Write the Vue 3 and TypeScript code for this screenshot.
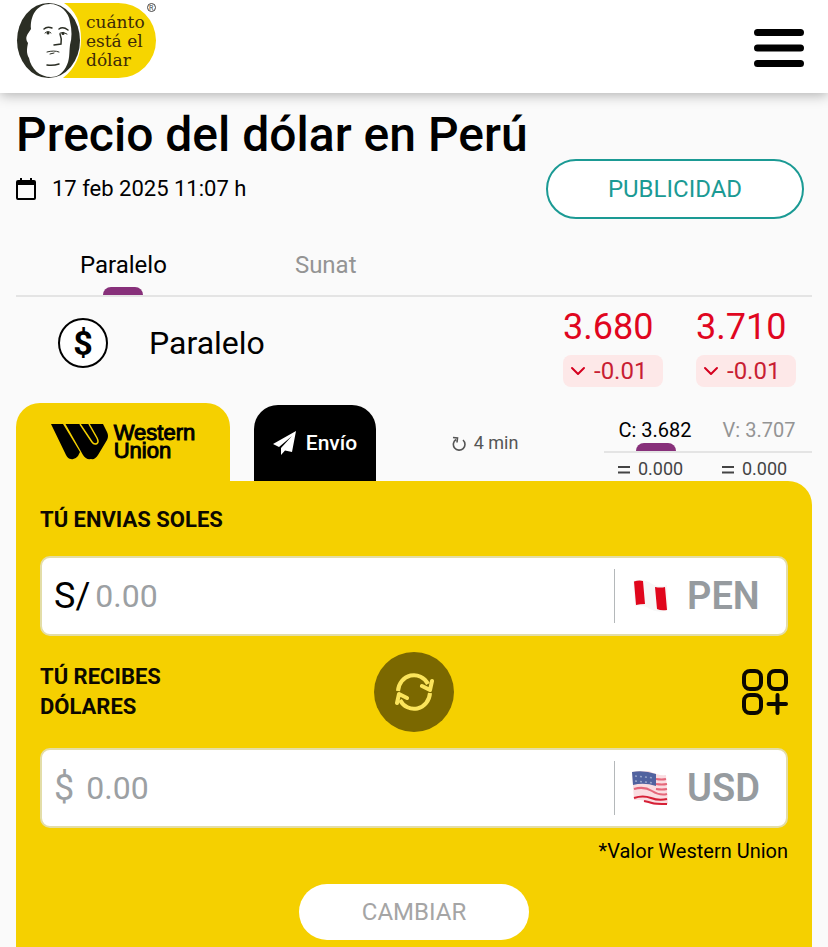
<script setup lang="ts">
import { ref } from 'vue'

interface Rate {
  side: string
  value: string
  change: string
}

const marketTabs: string[] = ['Paralelo', 'Sunat']
const activeMarket = ref('Paralelo')

const parallelRates: Rate[] = [
  { side: 'Compra', value: '3.680', change: '-0.01' },
  { side: 'Venta', value: '3.710', change: '-0.01' },
]

const partnerRates: Rate[] = [
  { side: 'C', value: '3.682', change: '0.000' },
  { side: 'V', value: '3.707', change: '0.000' },
]
const activeSide = ref('C')

const soles = ref('')
const dollars = ref('')
</script>

<template>
  <div class="page">
    <header class="topbar">
      <a class="brand" href="#" aria-label="cuánto está el dólar">
        <svg width="142" height="80" viewBox="0 0 142 80">
          <path d="M48 3H102.500a37.500 37.500 0 0 1 0 75H47Q65 64 65 39T48 3Z" fill="#f6d500" />
          <ellipse cx="32.500" cy="40.500" rx="31.500" ry="37.500" fill="#2b2e24" />
          <path d="M34 4C44 4 53 12 54 22C56 30 56 38 54 45C53 53 54 60 50 67C46 74 41 77 35 77C24 77 15 69 13 58C10 53 11 48 12 43C8 37 12 34 15 29C14 17 20 4 34 4Z" fill="#fff" />
          <g fill="none" stroke="#2b2e24" stroke-linecap="round">
            <path d="M28 29Q31 26 36 28M43 29Q47 26 52 30" stroke-width="1.500" />
            <path d="M29 33Q32 30 35 33M44 33Q47 31 51 34" stroke-width="1" />
            <path d="M44 34Q46 39 45 44L38 45" stroke-width="1.500" />
            <path d="M31 52Q38 50 43 52M34 54L38 53" stroke-width="1" />
            <path d="M31 65Q37 66 43 64" stroke-width="1.500" />
          </g>
          <circle cx="32" cy="33" r="1.500" fill="#2b2e24" />
          <circle cx="47" cy="33.500" r="1.500" fill="#2b2e24" />
          <text class="brand-word" x="70" y="28">cuánto</text>
          <text class="brand-word" x="70" y="47">está el</text>
          <text class="brand-word" x="70" y="66">dólar</text>
          <circle cx="135.500" cy="7.500" r="4" fill="none" stroke="#444" stroke-width="1" />
          <text class="brand-mark" x="133" y="10">R</text>
        </svg>
      </a>
      <button class="menu" type="button" aria-label="Menú">
        <svg width="50" height="40" viewBox="0 0 50 40">
          <path d="M3.500 4.500H46.500M3.500 20H46.500M3.500 35.500H46.500" stroke="#000" stroke-width="7" stroke-linecap="round" />
        </svg>
      </button>
    </header>

    <main class="content">
      <h1>Precio del dólar en Perú</h1>
      <div class="meta">
        <p class="date">
          <svg width="20" height="22" viewBox="0 0 20 22" aria-hidden="true">
            <path d="M4 0H6V2H14V0H16V2H18Q20 2 20 4V20Q20 22 18 22H2Q0 22 0 20V4Q0 2 2 2H4ZM2 7V20H18V7Z" fill="#000" fill-rule="evenodd" />
          </svg>
          <time datetime="2025-02-17T11:07">17 feb 2025 11:07 h</time>
        </p>
        <a class="ad" href="#">PUBLICIDAD</a>
      </div>

      <nav class="tabs">
        <button
          v-for="tab in marketTabs"
          :key="tab"
          type="button"
          class="tab"
          :class="{ active: tab === activeMarket }"
          @click="activeMarket = tab"
        >{{ tab }}</button>
      </nav>

      <section class="quote">
        <span class="coin">$</span>
        <h2>Paralelo</h2>
        <div class="rates">
          <div v-for="rate in parallelRates" :key="rate.side" class="rate">
            <strong>{{ rate.value }}</strong>
            <span class="change">
              <svg width="16" height="10" viewBox="0 0 16 10" aria-hidden="true">
                <path d="M2 2L8 8L14 2" fill="none" stroke="#d5001f" stroke-width="2" stroke-linecap="round" stroke-linejoin="round" />
              </svg>
              {{ rate.change }}
            </span>
          </div>
        </div>
      </section>

      <section class="partner">
        <button class="partner-tab" type="button">
          <svg width="57" height="36" viewBox="0 0 57 36" aria-hidden="true">
            <path d="M0 0H12L29 28L27 32Q24 36 20 35Q17 35 15 31Z" />
            <path d="M14.500 0H52L56 8Q58 12 56 16L47 31Q44 36 40 35Q35 36 32 31Z" />
            <path d="M29 0L41 18Q43 21 46 19.500Q48 18 46 14L38 0" fill="none" stroke="#f5d000" stroke-width="1.500" />
          </svg>
          <span class="partner-name">
            <span>Western</span>
            <span>Union</span>
          </span>
        </button>
        <button class="send-tab" type="button">
          <svg width="24" height="24" viewBox="0 0 24 24" aria-hidden="true">
            <path d="M23 0L0 13L6 16L19 5L8 17V24L12 19.500L19 21Z" fill="#fff" />
          </svg>
          Envío
        </button>
        <p class="age">
          <svg width="14" height="16" viewBox="0 0 14 16" aria-hidden="true">
            <path d="M4 4.500A5.800 5.800 0 1 0 11 5M1 2.500L5.500 3L5 7.500" fill="none" stroke="#555" stroke-width="1.600" />
          </svg>
          4 min
        </p>
        <div class="sides">
          <div class="side-tabs">
            <button
              v-for="rate in partnerRates"
              :key="rate.side"
              type="button"
              class="side"
              :class="{ active: rate.side === activeSide }"
              @click="activeSide = rate.side"
            >{{ rate.side }}: {{ rate.value }}</button>
          </div>
          <div class="side-changes">
            <span v-for="rate in partnerRates" :key="rate.side">
              <svg width="12" height="9" viewBox="0 0 12 9" aria-hidden="true">
                <path d="M0 2H12M0 7.500H12" stroke="#444" stroke-width="2" />
              </svg>
              {{ rate.change }}
            </span>
          </div>
        </div>
      </section>

      <form class="converter" @submit.prevent>
        <label class="caption" for="soles">TÚ ENVIAS SOLES</label>
        <div class="field">
          <span class="symbol">S/</span>
          <input id="soles" v-model="soles" type="text" inputmode="decimal" placeholder="0.00">
          <button class="currency" type="button">
            <svg width="36" height="34" viewBox="0 0 36 34" aria-hidden="true">
              <path d="M1 2Q11 -1 20 5Q28 9 35 6L36 31Q27 35 18 30Q11 25 3 27Z" fill="#f7f7f7" />
              <path d="M2 2.500Q7 1 11 2L13 25Q8 25 4 26Z" fill="#e0061c" />
              <path d="M23 8Q29 9 33 8L35 31Q29 32 25 30Z" fill="#e0061c" />
            </svg>
            <span>PEN</span>
          </button>
        </div>

        <div class="middle">
          <label class="caption" for="dollars">TÚ RECIBES DÓLARES</label>
          <button class="swap" type="button" aria-label="Invertir monedas">
            <svg width="40" height="40" viewBox="0 0 40 40">
              <g fill="none" stroke="#fbe45b" stroke-width="4" stroke-linejoin="round">
                <path d="M4 19A16 17 0 0 1 34 12" />
                <path d="M36 21A16 17 0 0 1 6 28" />
                <path d="M28 14L36 18L38 9M3 31L5 22L13 26" stroke-linecap="round" />
              </g>
            </svg>
          </button>
          <button class="more" type="button" aria-label="Más opciones">
            <svg width="48" height="48" viewBox="0 0 48 48">
              <g fill="none" stroke="#0c0800" stroke-width="4" stroke-linecap="round">
                <rect x="4" y="3" width="17" height="18" rx="6" />
                <rect x="29" y="3" width="17" height="18" rx="6" />
                <rect x="4" y="27" width="17" height="18" rx="6" />
                <path d="M37.500 27V45M28.500 36H46" />
              </g>
            </svg>
          </button>
        </div>

        <div class="field">
          <span class="symbol muted">$</span>
          <input id="dollars" v-model="dollars" type="text" inputmode="decimal" placeholder="0.00">
          <button class="currency" type="button">
            <svg width="36" height="34" viewBox="0 0 36 34" aria-hidden="true">
              <path d="M0 1Q8 -1 17 0Q26 5 34 4L36 33Q27 35 19 33Q10 28 2 29Z" fill="#fadde1" />
              <path d="M24 8Q30 9 34 8M24 13Q30 14 35 13M24 18Q30 19 35 18M2 18Q12 15 20 20T35 23" fill="none" stroke="#e5677a" stroke-width="2" />
              <path d="M2 27Q11 24 19 27T35 28M12 30Q17 31 20 32T35 33" fill="none" stroke="#d62036" stroke-width="2" />
              <path d="M0 1Q12 -1 24 3V15Q12 11 1 14Z" fill="#51629f" />
              <path d="M3 5L22 7M3 10L22 12" stroke="#97a3c8" stroke-width="1.500" stroke-dasharray="2 3" />
            </svg>
            <span>USD</span>
          </button>
        </div>

        <p class="note">*Valor Western Union</p>
        <button class="submit" type="submit">CAMBIAR</button>
      </form>
    </main>
  </div>
</template>

<style>
body {
  margin: 0;
  background: #fafafa;
}
</style>

<style scoped>
.page {
  display: flex;
  flex-direction: column;
  min-height: 100vh;
  box-sizing: border-box;
  color: #000;
  font-family: Roboto, sans-serif;
  font-size: 20px;
  line-height: 24px;
}

button {
  padding: 0;
  border: 0;
  background: none;
  color: inherit;
  font: inherit;
  cursor: pointer;
}

a {
  color: inherit;
  text-decoration: none;
}

h1,
h2,
p {
  margin: 0;
}

svg {
  display: block;
  flex: none;
}

.topbar {
  display: flex;
  justify-content: space-between;
  align-items: center;
  height: 93px;
  padding: 0 24px 0 16px;
  background: #fff;
  box-shadow: 0 2px 12px rgba(0, 0, 0, 0.3);
}

.brand {
  padding-bottom: 13px;
}

.menu {
  padding-top: 2px;
}

.brand-word {
  fill: #3d2a08;
  font-family: "DejaVu Serif", serif;
  font-size: 17px;
}

.brand-mark {
  fill: #444;
  font-family: Roboto, sans-serif;
  font-size: 7px;
}

.content {
  display: flex;
  flex: 1;
  flex-direction: column;
  padding: 14px 16px 0;
}

h1 {
  font-size: 48px;
  font-weight: 500;
  line-height: 56px;
}

.meta {
  display: flex;
  justify-content: space-between;
  align-items: flex-start;
  padding-right: 8px;
}

.date {
  display: flex;
  align-items: center;
  gap: 16px;
  padding-top: 14px;
  font-size: 22px;
}

.ad {
  box-sizing: border-box;
  width: 258px;
  height: 60px;
  margin-top: -4px;
  border: 2px solid #1b9a94;
  border-radius: 30px;
  background: #fff;
  color: #1b9a94;
  font-size: 24px;
  line-height: 56px;
  text-align: center;
}

.tabs {
  display: flex;
  margin-top: 22px;
  border-bottom: 2px solid #e4e4e4;
}

.tab {
  position: relative;
  height: 54px;
  padding: 0 64px 6px;
  color: #949494;
  font-size: 24px;
}

.tab.active,
.side.active {
  color: #000;
}

.tab.active::after,
.side.active::after {
  content: "";
  position: absolute;
  bottom: 0;
  left: calc(50% - 20px);
  width: 40px;
  height: 8px;
  border-radius: 8px 8px 0 0;
  background: #87307a;
}

.quote {
  display: flex;
  align-items: flex-start;
  height: 106px;
  box-sizing: border-box;
  padding: 10px 16px 0 42px;
}

.coin {
  box-sizing: border-box;
  width: 50px;
  height: 50px;
  margin-top: 11px;
  border: 2px solid #000;
  border-radius: 50%;
  background: #fff;
  font-size: 34px;
  font-weight: 700;
  line-height: 46px;
  text-align: center;
}

h2 {
  margin: 16px 0 0 41px;
  font-size: 32px;
  font-weight: 400;
  line-height: 40px;
}

.rates {
  display: flex;
  gap: 33px;
  margin-left: auto;
}

.rate {
  display: flex;
  flex-direction: column;
  width: 100px;
  gap: 8px;
}

.rate strong {
  color: #e0061f;
  font-size: 36px;
  font-weight: 400;
  line-height: 40px;
}

.change {
  display: flex;
  align-items: center;
  gap: 8px;
  height: 32px;
  padding-left: 7px;
  border-radius: 8px;
  background: #fde8e8;
  color: #c81e33;
  font-size: 24px;
}

.partner {
  display: flex;
  align-items: flex-end;
}

.partner-tab {
  display: flex;
  justify-content: center;
  align-items: center;
  gap: 6px;
  width: 214px;
  height: 78px;
  border-radius: 24px 24px 0 0;
  background: #f5d000;
  font-family: "Liberation Sans", sans-serif;
  font-size: 22px;
  line-height: 18px;
  text-align: left;
  -webkit-text-stroke: 1px #000;
}

.partner-name {
  display: flex;
  flex-direction: column;
}

.send-tab {
  display: flex;
  justify-content: center;
  align-items: center;
  gap: 9px;
  width: 122px;
  height: 76px;
  margin-left: 24px;
  border-radius: 24px 24px 0 0;
  background: #000;
  color: #fff;
  font-size: 21px;
  font-weight: 500;
}

.age {
  display: flex;
  align-items: center;
  gap: 8px;
  margin: 0 auto;
  padding: 0 10px 26px 0;
  color: #555;
  font-size: 18px;
}

.sides {
  width: 208px;
}

.side-tabs {
  display: grid;
  grid-template-columns: 1fr 1fr;
  border-bottom: 2px solid #e4e4e4;
}

.side {
  position: relative;
  height: 37px;
  padding: 0 2px 6px 0;
  color: #949494;
  font-size: 20px;
}

.side-changes {
  display: grid;
  grid-template-columns: 1fr 1fr;
  height: 28px;
  color: #444;
  font-size: 18px;
}

.side-changes span {
  display: flex;
  align-items: center;
  gap: 8px;
  padding: 4px 0 0 14px;
}

.converter {
  display: flex;
  flex: 1;
  flex-direction: column;
  padding: 24px 24px 7px;
  border-radius: 0 24px 0 0;
  background: #f5d000;
}

.caption {
  color: #0c0800;
  font-size: 22px;
  font-weight: 700;
  line-height: 30px;
}

.field {
  display: flex;
  align-items: center;
  box-sizing: border-box;
  height: 80px;
  padding: 0 24px 0 12px;
  border: 2px solid #e3dda8;
  border-radius: 10px;
  background: #fff;
  font-size: 32px;
}

.converter > .caption {
  margin-bottom: 21px;
}

.symbol {
  margin-right: 5px;
  font-size: 36px;
}

.symbol.muted {
  margin-right: 12px;
  color: #9ca0a3;
}

.field input {
  flex: 1;
  min-width: 0;
  height: 56px;
  padding: 0;
  border: 0;
  outline: 0;
  background: none;
  color: #000;
  font: inherit;
}

.field input::placeholder {
  color: #9ca0a3;
  opacity: 1;
}

.currency {
  display: flex;
  align-items: center;
  gap: 19px;
  box-sizing: border-box;
  width: 148px;
  height: 54px;
  padding-left: 17px;
  border-left: 1px solid #b4b8ba;
  color: #969b9f;
  font-size: 38px;
  font-weight: 600;
}

.middle {
  display: grid;
  grid-template-columns: 1fr 80px 1fr;
  align-items: center;
  height: 80px;
  margin: 16px 0;
}

.middle .caption {
  width: 140px;
}

.swap {
  display: flex;
  justify-content: center;
  align-items: center;
  height: 80px;
  border-radius: 50%;
  background: #7b6800;
}

.more {
  justify-self: end;
}

.note {
  margin-top: 11px;
  text-align: right;
}

.submit {
  align-self: center;
  width: 230px;
  height: 56px;
  margin-top: 21px;
  border-radius: 28px;
  background: #fff;
  color: #a5a5a5;
  font-size: 24px;
}
</style>
